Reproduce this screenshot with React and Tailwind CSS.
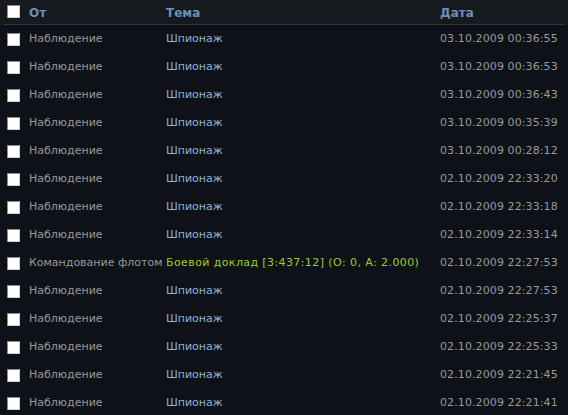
import React from 'react';

// Inbox table: header + message rows
const rows = [
  ['Наблюдение', 'Шпионаж', '03.10.2009 00:36:55'],
  ['Наблюдение', 'Шпионаж', '03.10.2009 00:36:53'],
  ['Наблюдение', 'Шпионаж', '03.10.2009 00:36:43'],
  ['Наблюдение', 'Шпионаж', '03.10.2009 00:35:39'],
  ['Наблюдение', 'Шпионаж', '03.10.2009 00:28:12'],
  ['Наблюдение', 'Шпионаж', '02.10.2009 22:33:20'],
  ['Наблюдение', 'Шпионаж', '02.10.2009 22:33:18'],
  ['Наблюдение', 'Шпионаж', '02.10.2009 22:33:14'],
  ['Командование флотом', 'Боевой доклад [3:437:12] (О: 0, А: 2.000)', '02.10.2009 22:27:53', true],
  ['Наблюдение', 'Шпионаж', '02.10.2009 22:27:53'],
  ['Наблюдение', 'Шпионаж', '02.10.2009 22:25:37'],
  ['Наблюдение', 'Шпионаж', '02.10.2009 22:25:33'],
  ['Наблюдение', 'Шпионаж', '02.10.2009 22:21:45'],
  ['Наблюдение', 'Шпионаж', '02.10.2009 22:21:41'],
];

const Box = () => (
  <span className="block w-[13px] h-[13px] bg-white border border-[#8c8c8c] border-r-[#d0d0d0] border-b-[#d0d0d0]" />
);

export default function App() {
  return (
    <div
      className="w-[568px] h-[415px] overflow-hidden bg-[#0e1117] text-[11px]"
      style={{ fontFamily: 'Verdana, "DejaVu Sans", sans-serif' }}
    >
      {/* Header */}
      <div className="bg-[#16191e] px-[5px]">
        <div className="h-[25px] grid grid-cols-[24px_137px_274px_1fr] items-center border-b border-dotted border-[#4d5157] font-bold text-[12px] text-[#6b8fba]">
          <div className="pl-[2px] -mt-[2px]"><Box /></div>
          <div className="pt-[2px]">От</div>
          <div className="pt-[2px]">Тема</div>
          <div className="pt-[2px]">Дата</div>
        </div>
      </div>

      {/* Rows */}
      <div className="px-[5px]">
        {rows.map(([from, subj, date, battle], i) => (
          <div key={i} className="h-[28px] grid grid-cols-[24px_137px_274px_1fr] items-center">
            <div className="pl-[2px]"><Box /></div>
            <div className="text-[#9a9a9a] whitespace-nowrap pt-[1px]">{from}</div>
            <div className={`whitespace-nowrap pt-[1px] ${battle ? 'text-[#9ccb2f] tracking-[0.4px]' : 'text-[#8fb3da]'}`}>{subj}</div>
            <div className="text-[#9a9a9a] whitespace-nowrap pt-[1px] tracking-[0.1px]">{date}</div>
          </div>
        ))}
      </div>
    </div>
  );
}
